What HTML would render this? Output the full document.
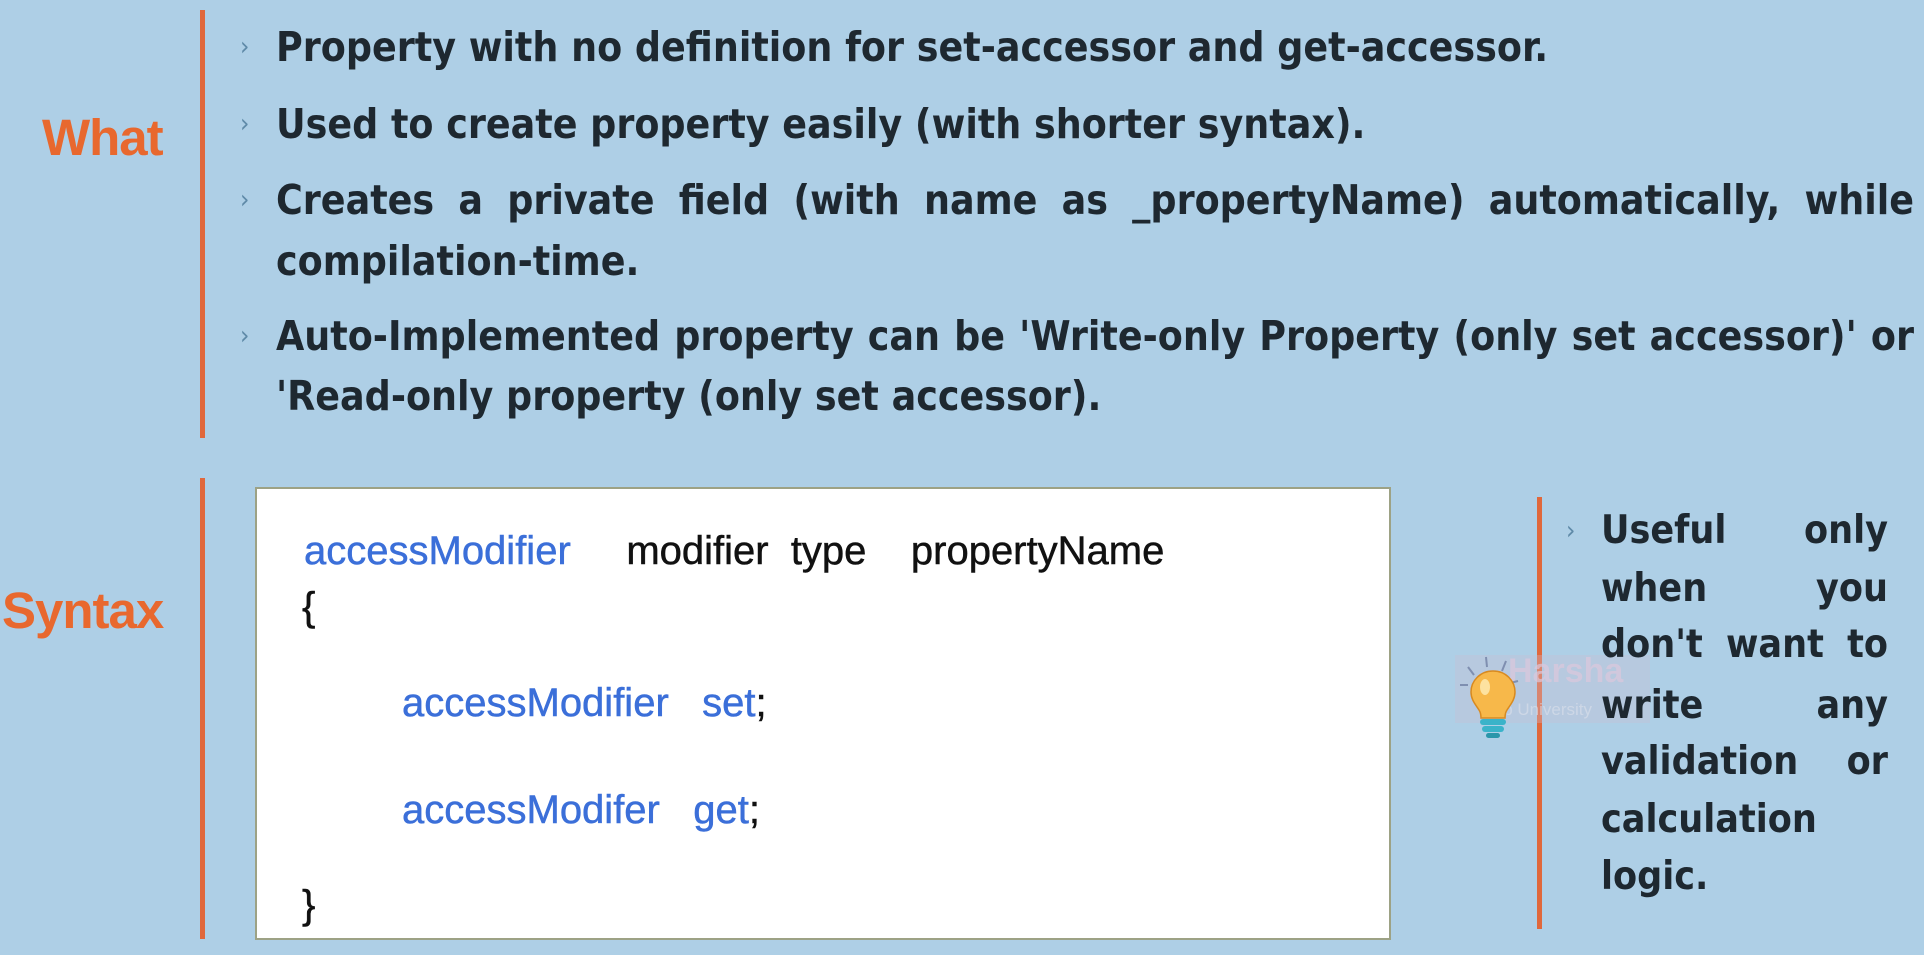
<!DOCTYPE html>
<html><head><meta charset="utf-8">
<style>
html,body{margin:0;padding:0}
body{width:1924px;height:955px;background:#aecfe6;position:relative;overflow:hidden;font-family:"DejaVu Sans Condensed","DejaVu Sans",sans-serif;color:#1e2830}
.lbl{position:absolute;font-family:"Liberation Sans",sans-serif;font-weight:bold;color:#e8682e;font-size:51px;letter-spacing:-1px}
.bar{position:absolute;width:5px;background:#e0683c}
.ln{position:absolute;font-size:40.6px;font-weight:bold;white-space:nowrap;line-height:50px}
.j{text-align:justify;text-align-last:justify;white-space:normal}
.chev{position:absolute;color:#5f8aa8;font-size:26px;line-height:50px}
.box{position:absolute;left:255px;top:487px;width:1136px;height:453px;background:#fff;border:2px solid #9da285;box-sizing:border-box}
.c{position:absolute;font-family:"Liberation Sans",sans-serif;font-size:40px;line-height:44px;white-space:nowrap;color:#3b6fd9;-webkit-text-stroke:0.5px}
.k{color:#111}
.r{position:absolute;left:1601px;width:287px;font-size:39px;font-weight:bold;line-height:50px}
</style></head><body>
<div class="lbl" style="left:42px;top:108px">What</div>
<div class="lbl" style="left:2px;top:581px">Syntax</div>
<div class="bar" style="left:200px;top:10px;height:428px"></div>
<div class="bar" style="left:200px;top:478px;height:461px"></div>
<div class="bar" style="left:1537px;top:497px;height:432px"></div>

<div class="chev" style="left:240px;top:22px">›</div>
<div class="ln" style="left:276px;top:22px">Property with no definition for set-accessor and get-accessor.</div>
<div class="chev" style="left:240px;top:99px">›</div>
<div class="ln" style="left:276px;top:99px">Used to create property easily (with shorter syntax).</div>
<div class="chev" style="left:240px;top:175px">›</div>
<div class="ln j" style="left:276px;top:175px;width:1638px">Creates a private field (with name as _propertyName) automatically, while</div>
<div class="ln" style="left:276px;top:236px">compilation-time.</div>
<div class="chev" style="left:240px;top:311px">›</div>
<div class="ln j" style="left:276px;top:311px;width:1638px">Auto-Implemented property can be 'Write-only Property (only set accessor)' or</div>
<div class="ln" style="left:276px;top:371px">'Read-only property (only set accessor).</div>

<div class="box"></div>
<div class="c" style="left:304px;top:529px">accessModifier&nbsp;&nbsp;&nbsp;&nbsp; <span class="k">modifier&nbsp; type&nbsp;&nbsp;&nbsp; propertyName</span></div>
<div class="c k" style="left:302px;top:585px">{</div>
<div class="c" style="left:402px;top:681px">accessModifier&nbsp;&nbsp; set<span class="k">;</span></div>
<div class="c" style="left:402px;top:788px">accessModifer&nbsp;&nbsp; get<span class="k">;</span></div>
<div class="c k" style="left:302px;top:883px">}</div>

<div style="position:absolute;left:1455px;top:655px;width:195px;height:68px;background:rgba(200,190,210,0.35)"></div>
<div style="position:absolute;left:1508px;top:652px;font-family:'Liberation Sans',sans-serif;font-weight:bold;font-size:34px;color:rgba(220,200,220,0.7)">Harsha</div>
<div style="position:absolute;left:1478px;top:700px;font-family:'Liberation Sans',sans-serif;font-size:17px;color:rgba(220,225,235,0.6)">Web University</div>
<svg style="position:absolute;left:1458px;top:655px" width="70" height="90" viewBox="0 0 70 90">
<g stroke="#7f8fb0" stroke-width="2"><line x1="10" y1="12" x2="16" y2="20"/><line x1="28" y1="2" x2="29" y2="12"/><line x1="48" y1="6" x2="44" y2="16"/><line x1="60" y1="26" x2="52" y2="28"/><line x1="2" y1="30" x2="10" y2="30"/></g>
<path d="M35 16c-13 0-22 10-22 21 0 8 5 13 8 18 2 3 2 6 2 8h24c0-2 0-5 2-8 3-5 8-10 8-18 0-11-9-21-22-21z" fill="#f7b84a" stroke="#d88a20" stroke-width="1.5"/>
<ellipse cx="27" cy="32" rx="5" ry="8" fill="#fde2a0"/>
<rect x="22" y="64" width="26" height="6" rx="3" fill="#3ab3c9"/>
<rect x="24" y="71" width="22" height="6" rx="3" fill="#3ab3c9"/>
<rect x="28" y="78" width="14" height="5" rx="2.5" fill="#2a96aa"/>
</svg>

<div class="chev" style="left:1566px;top:506px">›</div>
<div class="r j" style="top:506px">Useful only</div>
<div class="r j" style="top:564px">when you</div>
<div class="r j" style="top:620px">don't want to</div>
<div class="r j" style="top:681px">write any</div>
<div class="r j" style="top:737px">validation or</div>
<div class="r" style="top:795px">calculation</div>
<div class="r" style="top:852px">logic.</div>
</body></html>
